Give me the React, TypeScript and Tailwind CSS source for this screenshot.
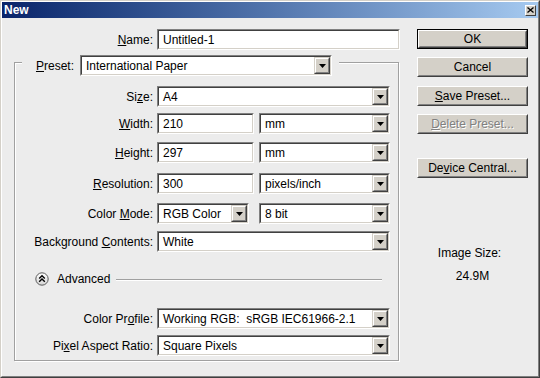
import React from "react";

const DropBtn = () => (
  <div className="w-[16px] h-full shrink-0 border border-t-[#d4d0c8] border-l-[#d4d0c8] border-r-[#404040] border-b-[#404040]">
    <div className="h-full border border-t-white border-l-white border-r-[#808080] border-b-[#808080] bg-[#d4d0c8] flex items-center justify-center">
      <svg width="7" height="4" viewBox="0 0 7 4">
        <path d="M0 0h7L3.5 4z" fill="#000" />
      </svg>
    </div>
  </div>
);

const Field: React.FC<{ w: string; select?: boolean; children: React.ReactNode }> = ({ w, select, children }) => (
  <div className={`${w} h-[21px] shrink-0 border border-t-[#808080] border-l-[#808080] border-r-white border-b-white`}>
    <div className="h-full border border-t-[#404040] border-l-[#404040] border-r-[#d4d0c8] border-b-[#d4d0c8] bg-white flex items-center">
      <span className="flex-1 pl-[4px] leading-[14px] whitespace-nowrap overflow-hidden">{children}</span>
      {select && <DropBtn />}
    </div>
  </div>
);

const Btn: React.FC<{ def?: boolean; disabled?: boolean; className?: string; children: React.ReactNode }> = ({
  def,
  disabled,
  className = "",
  children,
}) => {
  const inner = (
    <div className="h-full border border-t-white border-l-white border-r-[#404040] border-b-[#404040]">
      <div
        className={`h-full border border-t-[#d4d0c8] border-l-[#d4d0c8] border-r-[#808080] border-b-[#808080] bg-[#d4d0c8] flex items-center justify-center leading-[14px] ${
          disabled ? "text-[#808080] [text-shadow:1px_1px_0_#fff]" : "text-black"
        }`}
      >
        {children}
      </div>
    </div>
  );
  return (
    <div className={`w-[111px] h-[20px] ${def ? "border border-black" : ""} ${className}`}>{inner}</div>
  );
};

const Row: React.FC<{ label: React.ReactNode; className: string; children: React.ReactNode }> = ({
  label,
  className,
  children,
}) => (
  <div className={`flex items-center ${className}`}>
    <div className="w-[138px] text-right leading-[14px] whitespace-nowrap">{label}</div>
    <div className="ml-[4px] flex items-center">{children}</div>
  </div>
);

export default function App() {
  return (
    <div className="w-[540px] h-[378px] border border-t-[#d4d0c8] border-l-[#d4d0c8] border-r-[#404040] border-b-[#404040] font-['Liberation_Sans',Arial,sans-serif] text-[12px] text-black">
      <div className="h-full flex flex-col border border-t-white border-l-white border-r-[#808080] border-b-[#808080] bg-[#ececec]">
        {/* title bar */}
        <div className="h-[16px] shrink-0 flex items-center justify-between bg-gradient-to-r from-[#0a246a] to-[#a6caf0] pl-[2px] pr-[2px]">
          <span className="font-bold text-white leading-[14px]">New</span>
          <div className="w-[11px] h-[11px] border border-t-white border-l-white border-r-[#404040] border-b-[#404040] bg-[#d4d0c8] flex items-center justify-center">
            <svg width="7" height="6" viewBox="0 0 7 6">
              <path d="M0.5 0.5l6 5M6.5 0.5l-6 5" stroke="#000" strokeWidth="1.3" />
            </svg>
          </div>
        </div>

        {/* body */}
        <div className="flex pt-[11px]">
          <div className="flex flex-col">
            <div className="flex items-center">
              <div className="w-[151px] text-right leading-[14px]">
                <u>N</u>ame:
              </div>
              <div className="ml-[4px]">
                <Field w="w-[243px]">Untitled-1</Field>
              </div>
            </div>

            <div className="ml-[12px] mt-[12px] w-[385px] flex flex-col border border-[#a0a0a0] shadow-[inset_1px_1px_0_#fff,1px_1px_0_#fff] pb-[4px]">
              <div className="w-fit -mt-[8px] ml-[7px] flex items-center bg-[#ececec] pr-[7px]">
                <div className="w-[52px] text-right leading-[14px]">
                  <u>P</u>reset:
                </div>
                <div className="ml-[6px]">
                  <Field w="w-[252px]" select>
                    International Paper
                  </Field>
                </div>
              </div>

              <Row className="mt-[10px]" label={<>Si<u>z</u>e:</>}>
                <Field w="w-[233px]" select>A4</Field>
              </Row>
              <Row className="mt-[6px]" label={<><u>W</u>idth:</>}>
                <Field w="w-[97px]">210</Field>
                <div className="ml-[5px]">
                  <Field w="w-[131px]" select>mm</Field>
                </div>
              </Row>
              <Row className="mt-[8px]" label={<><u>H</u>eight:</>}>
                <Field w="w-[97px]">297</Field>
                <div className="ml-[5px]">
                  <Field w="w-[131px]" select>mm</Field>
                </div>
              </Row>
              <Row className="mt-[10px]" label={<><u>R</u>esolution:</>}>
                <Field w="w-[97px]">300</Field>
                <div className="ml-[5px]">
                  <Field w="w-[131px]" select>pixels/inch</Field>
                </div>
              </Row>
              <Row className="mt-[9px]" label={<>Color <u>M</u>ode:</>}>
                <Field w="w-[92px]" select>RGB Color</Field>
                <div className="ml-[10px]">
                  <Field w="w-[131px]" select>8 bit</Field>
                </div>
              </Row>
              <Row className="mt-[7px]" label={<>Background <u>C</u>ontents:</>}>
                <Field w="w-[233px]" select>White</Field>
              </Row>

              <div className="mt-[20px] ml-[20px] mr-[16px] h-[14px] flex items-center">
                <svg width="14" height="14" viewBox="0 0 14 14" className="shrink-0">
                  <defs>
                    <linearGradient id="adv" x1="0" y1="0" x2="0" y2="1">
                      <stop offset="0" stopColor="#ffffff" />
                      <stop offset="1" stopColor="#d4d4d4" />
                    </linearGradient>
                  </defs>
                  <circle cx="7" cy="7" r="6.2" fill="url(#adv)" stroke="#5a5a5a" />
                  <path d="M4.2 6.6L7 3.8l2.8 2.8M4.2 9.8L7 7l2.8 2.8" stroke="#000" strokeWidth="1.4" fill="none" />
                </svg>
                <span className="ml-[8px] leading-[14px]">Advanced</span>
                <div className="flex-1 ml-[6px] h-px bg-[#a0a0a0] shadow-[0_1px_0_#fff]" />
              </div>

              <Row className="mt-[22px]" label={<>Color Pr<u>o</u>file:</>}>
                <Field w="w-[233px]" select>Working RGB:&nbsp; sRGB IEC61966-2.1</Field>
              </Row>
              <Row className="mt-[6px]" label={<>Pi<u>x</u>el Aspect Ratio:</>}>
                <Field w="w-[233px]" select>Square Pixels</Field>
              </Row>
            </div>
          </div>

          <div className="ml-[17px] flex flex-col">
            <Btn def>OK</Btn>
            <Btn className="mt-[8px]">Cancel</Btn>
            <Btn className="mt-[9px]">
              <span>
                <u>S</u>ave Preset...
              </span>
            </Btn>
            <Btn className="mt-[8px]" disabled>
              <span>
                <u>D</u>elete Preset...
              </span>
            </Btn>
            <Btn className="mt-[24px]">
              <span>
                De<u>v</u>ice Central...
              </span>
            </Btn>
            <div className="mt-[68px] w-[111px] text-center leading-[14px] pr-[6px]">Image Size:</div>
            <div className="mt-[9px] w-[111px] text-center leading-[14px]">24.9M</div>
          </div>
        </div>
      </div>
    </div>
  );
}
